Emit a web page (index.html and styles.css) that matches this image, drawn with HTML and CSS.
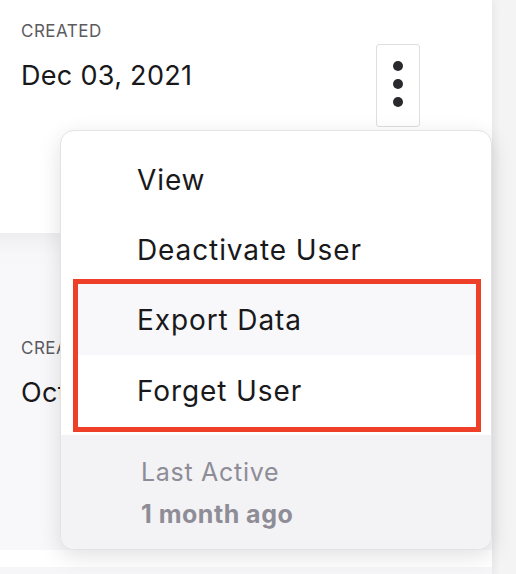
FILE: index.html
```html
<!DOCTYPE html>
<html>
<head>
<meta charset="utf-8">
<link rel="stylesheet" href="styles.css">
</head>
<body>
<div class="page">
  <div class="list">
    <div class="row row-first">
      <div class="cell">
        <div class="label">CREATED</div>
        <div class="value">Dec 03, 2021</div>
      </div>
      <button class="kebab" aria-label="More actions">
        <span class="dot"></span><span class="dot"></span><span class="dot"></span>
      </button>
    </div>
    <div class="row row-second">
      <div class="cell">
        <div class="label">CREATED</div>
        <div class="value">Oct 12, 2021</div>
      </div>
    </div>
    <div class="row-gap"></div>
    <div class="row row-third"></div>
  </div>
  <div class="menu">
    <div class="menu-items">
      <div class="item item-a">View</div>
      <div class="item item-b">Deactivate User</div>
      <div class="highlight">
        <div class="item item-c item-hover">Export Data</div>
        <div class="item item-d">Forget User</div>
      </div>
    </div>
    <div class="menu-footer">
      <div class="foot-label">Last Active</div>
      <div class="foot-value">1 month ago</div>
    </div>
  </div>
</div>
</body>
</html>
```

FILE: styles.css
```css
* { box-sizing: border-box; }
html, body { margin: 0; padding: 0; }
body {
  width: 516px;
  height: 574px;
  overflow: hidden;
  background: #f4f4f5;
  font-family: Inter, "Noto Sans", sans-serif;
  color: #1b1b1f;
}
.page {
  position: relative;
  width: 516px;
  height: 574px;
}
.list {
  width: 492px;
  display: flex;
  flex-direction: column;
  box-shadow: 2px 0 8px rgba(0,0,0,0.06);
}
.row {
  display: flex;
  justify-content: space-between;
  align-items: flex-start;
  padding-left: 21px;
  padding-right: 72px;
}
.row-first {
  background: #ffffff;
  height: 233px;
  padding-top: 20px;
}
.row-second {
  background: linear-gradient(#eeeef0 0px, #f7f7f9 20px, #f8f8fa 40px);
  height: 317px;
  padding-top: 104px;
}
.row-gap {
  height: 17px;
  background: #ffffff;
}
.row-third {
  height: 20px;
  background: #f6f6f8;
}
.label {
  font-size: 17px;
  line-height: 22px;
  color: #5b5b60;
  letter-spacing: 0.5px;
}
.value {
  margin-top: 17px;
  font-size: 27px;
  line-height: 34px;
  letter-spacing: 0.3px;
  color: #18181b;
}
.kebab {
  margin-top: 24px;
  width: 44px;
  height: 83px;
  border: 1.5px solid #dedee2;
  border-radius: 3px;
  background: #ffffff;
  display: flex;
  flex-direction: column;
  align-items: center;
  justify-content: center;
  gap: 8px;
  padding: 0 0 4px;
}
.dot {
  width: 10px;
  height: 10px;
  border-radius: 50%;
  background: #2a2a2e;
}
.menu {
  position: absolute;
  left: 60px;
  top: 130px;
  width: 432px;
  height: 420px;
  background: #ffffff;
  border: 1px solid #e3e3e6;
  border-radius: 14px;
  box-shadow: 0 6px 22px rgba(0,0,0,0.12);
  overflow: hidden;
  display: flex;
  flex-direction: column;
}
.menu-items {
  padding: 14px 0 8px;
}
.highlight {
  margin: 0 15px 0 17px;
  outline: 5px solid #ee4028;
}
.item {
  display: flex;
  align-items: center;
  padding-left: 76px;
  font-size: 28px;
  letter-spacing: 0.9px;
  color: #19191c;
}
.item-a { height: 70px; }
.item-b { height: 69px; }
.item-c { height: 71px; }
.item-d { height: 72px; }
.highlight .item {
  padding-left: 59px;
}
.item-hover {
  background: #f8f8fa;
}
.menu-footer {
  flex: 1;
  background: #f3f3f5;
  padding: 22px 0 0 80px;
}
.foot-label {
  font-size: 25px;
  line-height: 30px;
  letter-spacing: 0.7px;
  color: #8e8d97;
}
.foot-value {
  margin-top: 12px;
  font-size: 25px;
  line-height: 30px;
  letter-spacing: 0.5px;
  font-weight: 700;
  color: #8e8d97;
}
```
